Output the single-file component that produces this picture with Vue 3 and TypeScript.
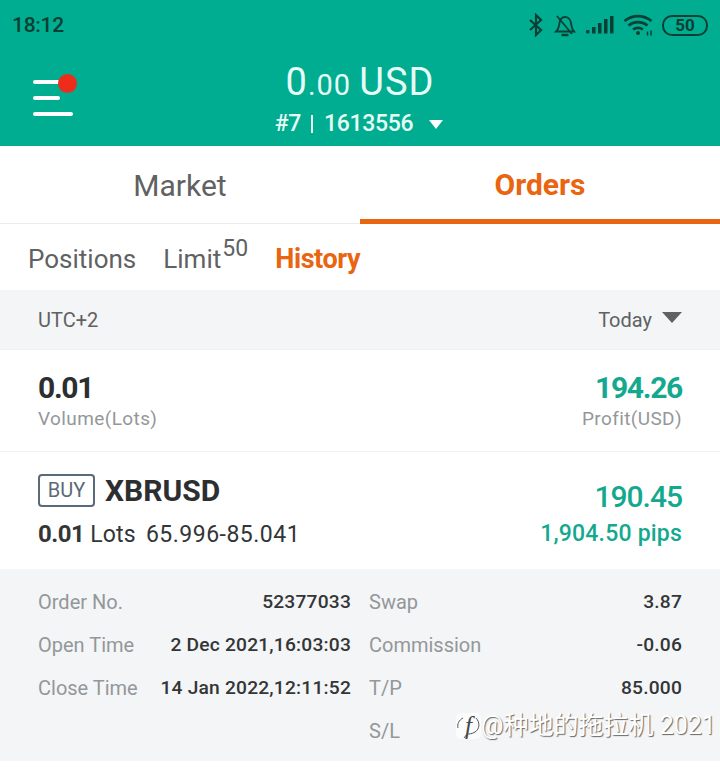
<script setup lang="ts">
const left = [
  { label: 'Order No.', value: '52377033' },
  { label: 'Open Time', value: '2 Dec 2021,16:03:03' },
  { label: 'Close Time', value: '14 Jan 2022,12:11:52' },
]
const right = [
  { label: 'Swap', value: '3.87' },
  { label: 'Commission', value: '-0.06' },
  { label: 'T/P', value: '85.000' },
  { label: 'S/L', value: '' },
]
</script>

<template>
  <div class="page">
    <header class="head">
      <div class="status">
        <span class="time">18:12</span>
        <div class="status-icons">
          <svg width="16" height="24" viewBox="0 0 16 24" fill="none" stroke="#0a3f35" stroke-width="2.200"><path d="M2 7l11 10-5 5V2l5 5L2 17" /></svg>
          <svg width="24" height="24" viewBox="0 0 24 24" fill="none" stroke="#0a3f35" stroke-width="1.800"><path d="M3 18.500c2.500-2 3-5 3.500-8.500.5-3.500 2.500-6 5.500-6s5.500 2.500 6 6c.5 3.500 1 6.500 3 8.500z" /><path d="M4 3l15 18" /><path d="M8.500 22h7" stroke-width="2.400" /></svg>
          <svg width="28" height="20" viewBox="0 0 28 20" fill="#0a3f35"><rect x="0" y="15" width="3.500" height="3.500" rx="1" /><rect x="6" y="12" width="3.500" height="6.500" /><rect x="12" y="8" width="3.500" height="10.500" /><rect x="18" y="4" width="3.500" height="14.500" /><rect x="24" y="1" width="3.500" height="17.500" /></svg>
          <svg width="30" height="24" viewBox="0 0 30 24" fill="none" stroke="#0a3f35" stroke-width="2.600"><path d="M1.500 8c8-6.500 19-6.500 27 0" /><path d="M5.500 12.500c5.500-4.500 13.500-4.500 19 0" /><path d="M10 16.500c3-2 7-2 10 0" /><circle cx="15" cy="20" r="2" fill="#0a3f35" stroke="none" /><path d="M24.500 18.500v4M28 17.500v5" stroke-width="1.500" /></svg>
          <span class="battery">50</span>
        </div>
      </div>
      <div class="bar">
        <div class="menu">
          <i class="l1"></i><i class="l2"></i><i class="l3"></i>
          <b class="dot"></b>
        </div>
        <div class="balance">
          <div class="amount"><span class="big">0</span>.00 <span class="big">USD</span></div>
          <div class="account">#7<i class="sep"></i>1613556<i class="caret"></i></div>
        </div>
      </div>
    </header>

    <nav class="tabs">
      <div class="tab">Market</div>
      <div class="tab active">Orders</div>
    </nav>

    <div class="subtabs">
      <span>Positions</span>
      <span class="limit">Limit<sup>50</sup></span>
      <span class="on">History</span>
    </div>

    <div class="filter">
      <span>UTC+2</span>
      <span class="today">Today<i class="tri"></i></span>
    </div>

    <section class="summary">
      <div>
        <div class="num dark">0.01</div>
        <div class="cap">Volume(Lots)</div>
      </div>
      <div class="end">
        <div class="num green">194.26</div>
        <div class="cap">Profit(USD)</div>
      </div>
    </section>

    <section class="order">
      <div>
        <div class="sym-row"><span class="tag">BUY</span><span class="sym">XBRUSD</span></div>
        <div class="lots"><b>0.01</b> Lots<span class="range">65.996-85.041</span></div>
      </div>
      <div class="end">
        <div class="pl">190.45</div>
        <div class="pips">1,904.50 pips</div>
      </div>
    </section>

    <section class="detail">
      <div class="col">
        <div v-for="r in left" :key="r.label" class="row"><span class="k">{{ r.label }}</span><span class="v">{{ r.value }}</span></div>
      </div>
      <div class="col">
        <div v-for="r in right" :key="r.label" class="row"><span class="k">{{ r.label }}</span><span class="v">{{ r.value }}</span></div>
      </div>
      <div class="mark"><span class="logo">f<svg class="bubble" width="26" height="28" viewBox="0 0 26 28" fill="none" stroke="#555" stroke-width="1"><path d="M7 5c-4 2-6 6-5 10M20 5c4 4 4 11-1 14-3 2-6 2-8 2l-3 4" /></svg></span>@种地的拖拉机 2021</div>
    </section>
  </div>
</template>

<style>
body { margin: 0; background: #fff; }
</style>

<style scoped>
.page { width: 720px; height: 770px; overflow: hidden; background: #fff; font-family: Roboto, "Noto Sans CJK SC", sans-serif; }
.head { height: 146px; background: #00ad90; }
.status { height: 50px; display: flex; justify-content: space-between; align-items: center; padding: 0 12px; }
.time { font-size: 21px; font-weight: 500; color: #0a3f35; letter-spacing: -.3px; }
.status-icons { display: flex; align-items: center; gap: 9px; }
.battery { width: 42px; height: 17px; border: 2px solid #0a3f35; border-radius: 10px; color: #0a3f35; font-size: 17px; font-weight: 700; line-height: 17px; text-align: center; }
.bar { position: relative; height: 96px; }
.menu { position: absolute; left: 33px; top: 30px; width: 44px; height: 36px; }
.menu i { position: absolute; left: 0; height: 4px; border-radius: 2px; background: #fff; }
.l1 { top: 0; width: 27px; }
.l2 { top: 16px; width: 27px; }
.l3 { top: 32px; width: 40px; }
.dot { position: absolute; left: 25px; top: -6px; width: 19px; height: 19px; border-radius: 50%; background: #ee2c1c; }
.balance { color: #e6fbf6; text-align: center; padding-top: 11px; }
.amount { font-size: 29px; line-height: 42px; letter-spacing: 1px; }
.big { font-size: 38px; }
.account { display: flex; justify-content: center; align-items: center; font-size: 23px; font-weight: 500; line-height: 30px; letter-spacing: -.3px; margin-top: 3px; margin-left: -2px; }
.sep { width: 2px; height: 18px; background: #e6fbf6; margin: 0 11px 0 10px; }
.caret { margin-left: 16px; border-left: 7.500px solid transparent; border-right: 7.500px solid transparent; border-top: 9px solid #fff; }
.tabs { display: flex; height: 78px; border-bottom: 1px solid #eceeee; box-sizing: border-box; }
.tab { flex: 1; display: flex; align-items: center; justify-content: center; font-size: 30px; color: #5f6163; padding-top: 2px; box-sizing: border-box; }
.tab.active { color: #e9650f; font-weight: 700; border-bottom: 5px solid #e9650f; height: 78px; font-size: 30px; padding-top: 4px; }
.subtabs { height: 66px; display: flex; align-items: center; gap: 27px; padding: 4px 28px 0; font-size: 26px; color: #5f6163; box-sizing: border-box; }
.subtabs .limit { position: relative; padding-right: 27px; }
.limit sup { position: absolute; left: 59px; top: -8px; font-size: 23px; line-height: 26px; vertical-align: baseline; }
.on { color: #e9650f; font-weight: 700; font-size: 27px; letter-spacing: -.4px; }
.filter { height: 60px; background: #f3f5f6; display: flex; align-items: center; justify-content: space-between; padding: 0 38px; font-size: 20px; color: #5f6163; border-bottom: 1px solid #eef0f1; box-sizing: border-box; }
.today { display: flex; align-items: center; }
.tri { margin-left: 10px; margin-top: -4px; border-left: 10px solid transparent; border-right: 10px solid transparent; border-top: 11px solid #5f6163; }
.summary { height: 102px; padding: 21px 38px 0; box-sizing: border-box; display: flex; justify-content: space-between; border-bottom: 1px solid #f0f1f2; }
.end { text-align: right; }
.num { font-size: 30px; font-weight: 700; line-height: 34px; letter-spacing: -1.300px; }
.dark { color: #2c2e30; }
.green { color: #14a98f; }
.cap { font-size: 19px; line-height: 28px; color: #94979a; letter-spacing: .4px; }
.order { height: 117px; padding: 22px 38px 0; box-sizing: border-box; display: flex; justify-content: space-between; }
.sym-row { display: flex; align-items: center; gap: 10px; height: 33px; }
.tag { width: 57px; height: 33px; border: 2px solid #5a6a78; border-radius: 4px; box-sizing: border-box; color: #5a6a78; font-size: 20px; text-align: center; line-height: 29px; }
.sym { font-size: 30px; font-weight: 700; color: #2c2e30; }
.lots { margin-top: 12px; font-size: 23px; line-height: 30px; color: #333537; letter-spacing: .2px; }
.lots b { font-size: 24px; font-weight: 700; letter-spacing: -.5px; }
.range { margin-left: 10px; letter-spacing: .5px; }
.pl { font-size: 30px; font-weight: 500; color: #14a98f; line-height: 38px; margin-top: 4px; letter-spacing: -1px; }
.pips { font-size: 23px; font-weight: 500; color: #14a98f; line-height: 36px; letter-spacing: .2px; }
.detail { position: relative; height: 192px; background: #f3f5f6; padding: 11px 38px 0; box-sizing: border-box; display: flex; gap: 18px; }
.col { width: 313px; }
.row { height: 43px; display: flex; justify-content: space-between; align-items: center; }
.k { font-size: 20px; color: #94979a; }
.v { font-size: 19.200px; color: #333537; font-weight: 500; letter-spacing: .2px; }
.mark { position: absolute; left: 456px; top: 142px; font-size: 25px; line-height: 30px; color: #fff; white-space: nowrap; text-shadow: 1px 1px 1px #666; display: flex; align-items: center; }
.logo { position: relative; width: 25px; height: 26px; font-family: "Liberation Serif", serif; font-style: italic; text-align: center; color: #444; text-shadow: none; background: #fbfcfc; border-radius: 5px; line-height: 26px; }
.bubble { position: absolute; left: 0; top: 0; }
</style>
